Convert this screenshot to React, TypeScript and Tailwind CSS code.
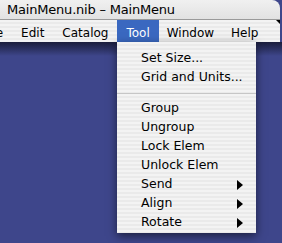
import React from "react";

const stripes =
  "bg-[repeating-linear-gradient(180deg,#f3f3f3_0px,#f3f3f3_2px,#eaeaea_2px,#eaeaea_4px)]";

type Item = { label: string; sub?: boolean } | "sep";

const toolItems: Item[] = [
  { label: "Set Size..." },
  { label: "Grid and Units..." },
  "sep",
  { label: "Group" },
  { label: "Ungroup" },
  { label: "Lock Elem" },
  { label: "Unlock Elem" },
  { label: "Send", sub: true },
  { label: "Align", sub: true },
  { label: "Rotate", sub: true },
];

function Arrow() {
  return (
    <svg width="6" height="10" viewBox="0 0 6 10" className="block shrink-0">
      <path d="M0 0 L6 5 L0 10 Z" fill="#000" />
    </svg>
  );
}

export default function App() {
  return (
    <div
      className="relative w-[282px] h-[243px] overflow-hidden bg-[#3e468b] text-black whitespace-nowrap"
      style={{ fontFamily: '"DejaVu Sans", "Lucida Grande", sans-serif' }}
    >
      <div className="w-[280px] rounded-tr-[8px] overflow-hidden">
        {/* title bar */}
        <div className="h-[20px] flex items-center pl-[7px] text-[13px] bg-gradient-to-b from-[#f0f0f0] to-[#e2e2e2] border-b border-[#9a9a9a]">
          <span className="leading-none tracking-[-0.2px]">MainMenu.nib – MainMenu</span>
        </div>
        {/* menu bar */}
        <div className={`relative h-[22px] flex items-stretch text-[12px] ${stripes}`}>
          <div className="ml-[-26px] px-[9px] flex items-center pt-[3px]">File</div>
          <div className="px-[9px] flex items-center pt-[3px]">Edit</div>
          <div className="px-[9px] flex items-center pt-[3px]">Catalog</div>
          <div className="px-[9px] flex items-center pt-[3px] bg-[#3a68c0] text-white">Tool</div>
          <div className="px-[8px] flex items-center pt-[3px]">Window</div>
          <div className="px-[9px] flex items-center pt-[3px]">Help</div>
          <div className="absolute right-0 top-0 w-0 h-0 border-t-[4px] border-t-black border-l-[4px] border-l-transparent" />
        </div>
      </div>
      {/* desktop shade under menu bar */}
      <div className="h-[14px] bg-gradient-to-b from-[#1b1e3c] to-[#3e468b]" />

      {/* dropdown */}
      <div
        className={`absolute left-[117px] top-[42px] w-[139px] h-[191px] pt-[7px] text-[12.5px] shadow-[0_3px_9px_rgba(0,0,0,0.55)] ${stripes}`}
      >
        {toolItems.map((it, i) =>
          it === "sep" ? (
            <div key={i} className="h-[12px] flex items-center">
              <div className="w-full h-px bg-[#c6c6c6]" />
            </div>
          ) : (
            <div key={i} className="h-[19px] flex items-center pl-[24px] pr-[13px]">
              <span className="flex-1 leading-none">{it.label}</span>
              {it.sub && <Arrow />}
            </div>
          )
        )}
      </div>
    </div>
  );
}
